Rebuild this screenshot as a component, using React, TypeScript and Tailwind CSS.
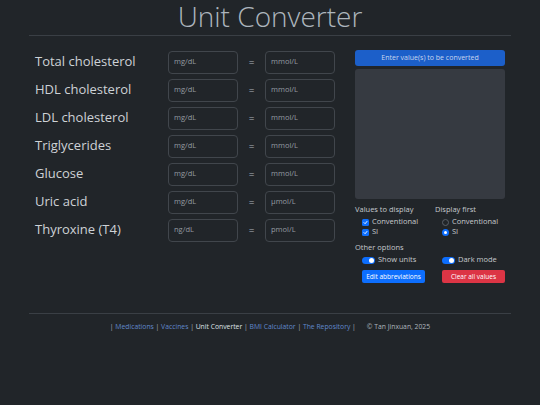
import React from "react";

const rows = [
  { label: "Total cholesterol", a: "mg/dL", b: "mmol/L" },
  { label: "HDL cholesterol", a: "mg/dL", b: "mmol/L" },
  { label: "LDL cholesterol", a: "mg/dL", b: "mmol/L" },
  { label: "Triglycerides", a: "mg/dL", b: "mmol/L" },
  { label: "Glucose", a: "mg/dL", b: "mmol/L" },
  { label: "Uric acid", a: "mg/dL", b: "µmol/L" },
  { label: "Thyroxine (T4)", a: "ng/dL", b: "pmol/L" },
];

function Check({ label }: { label: string }) {
  return (
    <div className="flex items-center gap-[3px] h-[10px]">
      <span className="w-[7px] h-[7px] rounded-[1.5px] bg-[#0d6efd] flex items-center justify-center">
        <svg width="5" height="5" viewBox="0 0 10 10">
          <path d="M2 5.2 L4.2 7.4 L8 2.8" fill="none" stroke="#fff" strokeWidth="1.8" strokeLinecap="round" strokeLinejoin="round" />
        </svg>
      </span>
      <span>{label}</span>
    </div>
  );
}

function Radio({ label, checked }: { label: string; checked?: boolean }) {
  return (
    <div className="flex items-center gap-[3px] h-[10px]">
      {checked ? (
        <span className="w-[7px] h-[7px] rounded-full bg-[#0d6efd] flex items-center justify-center">
          <span className="w-[3px] h-[3px] rounded-full bg-white" />
        </span>
      ) : (
        <span className="w-[7px] h-[7px] rounded-full border border-[#5a6068] bg-[#212529]" />
      )}
      <span>{label}</span>
    </div>
  );
}

function Switch({ label }: { label: string }) {
  return (
    <div className="flex items-center gap-[3px] h-[10px]">
      <span className="w-[13px] h-[7px] rounded-full bg-[#0d6efd] flex items-center justify-end pr-[1px]">
        <span className="w-[5px] h-[5px] rounded-full bg-white" />
      </span>
      <span>{label}</span>
    </div>
  );
}

export default function App() {
  return (
    <div
      className="w-[540px] h-[405px] bg-[#212529] text-[#dee2e6] overflow-hidden"
      style={{ fontFamily: '"Open Sans", "Noto Sans", sans-serif' }}
    >
      <div className="w-[482px] mx-auto">
        <h1 className="text-center text-[28px] font-light leading-[32px] text-[#adb5bd]">
          Unit Converter
        </h1>
        <div className="mt-[3px] border-t border-[#3a3f45]" />
        <div className="flex px-[6px] pt-[12px]">
          <div className="flex flex-col">
            {rows.map((r) => (
              <div key={r.label} className="flex items-center h-[28px]">
                <div className="w-[133px] text-[13px] text-[#ced2d6]">{r.label}</div>
                <div className="w-[70px] h-[23px] rounded-[4px] border border-[#41464c] flex items-center pl-[5px] text-[7.5px] text-[#959ba1]">
                  {r.a}
                </div>
                <div className="w-[27px] text-center text-[10px] text-[#adb5bd]">=</div>
                <div className="w-[70px] h-[23px] rounded-[4px] border border-[#41464c] flex items-center pl-[5px] text-[7.5px] text-[#959ba1]">
                  {r.b}
                </div>
              </div>
            ))}
          </div>
          <div className="ml-[20px] w-[150px] pt-[2px] text-[7.5px] text-[#c5c9cd]">
            <div className="h-[16px] rounded-[3px] bg-[#1c5fc9] flex items-center justify-center text-[7px] text-[#c8d6ef]">
              Enter value(s) to be converted
            </div>
            <div className="mt-[3px] h-[130px] rounded-[3px] bg-[#363a41]" />
            <div className="flex mt-[5px]">
              <div className="w-[80px]">
                <div className="h-[11px] flex items-center">Values to display</div>
                <div className="pl-[7px] mt-[2px]">
                  <Check label="Conventional" />
                  <Check label="SI" />
                </div>
              </div>
              <div>
                <div className="h-[11px] flex items-center">Display first</div>
                <div className="pl-[7px] mt-[2px]">
                  <Radio label="Conventional" />
                  <Radio label="SI" checked />
                </div>
              </div>
            </div>
            <div className="h-[11px] flex items-center mt-[5px]">Other options</div>
            <div className="flex mt-[2px] pl-[7px]">
              <div className="w-[80px]">
                <Switch label="Show units" />
              </div>
              <Switch label="Dark mode" />
            </div>
            <div className="flex mt-[5px] pl-[7px]">
              <div className="w-[80px]">
                <div className="w-[63px] h-[13px] rounded-[2px] bg-[#0d6efd] text-white text-[6.5px] flex items-center justify-center">
                  Edit abbreviations
                </div>
              </div>
              <div className="w-[63px] h-[13px] rounded-[2px] bg-[#dc3545] text-white text-[6.5px] flex items-center justify-center">
                Clear all values
              </div>
            </div>
          </div>
        </div>
        <div className="mt-[30px] border-t border-[#3a3f45]" />
        <div className="text-center text-[6.8px] mt-[8px] text-[#adb5bd]">
          <span>| </span>
          <span className="text-[#6088cc]">Medications</span>
          <span> | </span>
          <span className="text-[#6088cc]">Vaccines</span>
          <span> | </span>
          <span className="text-[#dee2e6]">Unit Converter</span>
          <span> | </span>
          <span className="text-[#6088cc]">BMI Calculator</span>
          <span> | </span>
          <span className="text-[#6088cc]">The Repository</span>
          <span> |</span>
          <span className="ml-[11px]">© Tan Jinxuan, 2025</span>
        </div>
      </div>
    </div>
  );
}
